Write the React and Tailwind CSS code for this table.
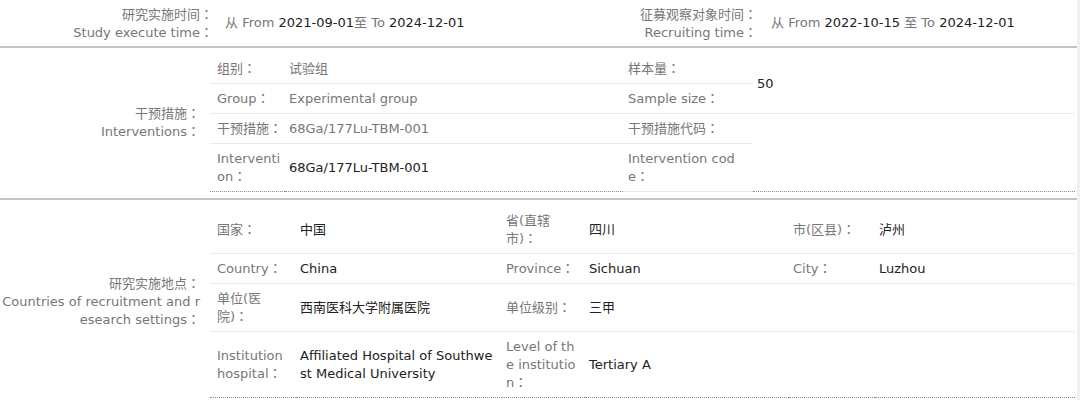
const font = "font-['DejaVu_Sans','Noto_Sans_CJK_SC',sans-serif]"

// grey label cell / value cell helpers
const lbl = 'flex items-center text-[#777] pt-[6px] pb-[5px]'
const val = 'flex items-center text-[#222] pt-[6px] pb-[5px]'
const line = 'border-b border-[#ebebeb]'
const dots = 'border-b border-dotted border-[#8a8a8a]'

function Period({ from, to, gap }) {
  return (
    <span>
      <span className="text-[#777]">从 From </span>
      {from}
      <span className="text-[#777]">{gap ? ' 至 To ' : '至 To '}</span>
      {to}
    </span>
  )
}

// ─── Row 1: study / recruiting time ───────────────────────────────────────────
// labels carry lang="zh-TW" so the full-width colon sits centred in its box
function TimeRow() {
  return (
    <div className="flex border-b-2 border-[#c4c4c4]">
      <div lang="zh-TW" className="w-[218px] shrink-0 pr-[5px] pt-[6px] pb-[4px] text-right text-[#777]">
        <div>研究实施时间：</div>
        <div>Study execute time：</div>
      </div>
      <div className="w-[402px] shrink-0 pl-[7px] flex items-center text-[#222]">
        <Period from="2021-09-01" to="2024-12-01" />
      </div>
      <div lang="zh-TW" className="w-[142px] shrink-0 pr-[5px] pt-[6px] pb-[4px] text-right text-[#777]">
        <div>征募观察对象时间：</div>
        <div>Recruiting time：</div>
      </div>
      <div className="flex-1 pl-[9px] flex items-center text-[#222]">
        <Period from="2022-10-15" to="2024-12-01" gap />
      </div>
    </div>
  )
}

function OuterLabel({ top, bottom }) {
  return (
    <div
      lang="zh-TW"
      className="w-[205px] shrink-0 pr-[5px] flex flex-col justify-center items-end text-right text-[#777] break-all"
    >
      <div>{top}</div>
      <div>{bottom}</div>
    </div>
  )
}

function Cell({ base, border, pad, span, s, label }) {
  return (
    <div lang={label ? 'zh-TW' : undefined} className={`${base} ${border} ${pad} ${span || ''}`}>
      <span>{s}</span>
    </div>
  )
}

// ─── Row 2: interventions ─────────────────────────────────────────────────────
function Interventions() {
  const l1 = 'pl-[7px] pr-[2px]'
  const l2 = 'pl-[5px] pr-[15px]'
  const v = 'pl-[4px]'
  return (
    <div className="flex border-b-2 border-[#c4c4c4] pt-[6px] pb-[6px]">
      <OuterLabel top="干预措施：" bottom="Interventions：" />
      <div className="ml-[5px] w-[865px] grid grid-cols-[75px_338px_130px_322px] break-all">
        <Cell label base={lbl} border={line} pad={l1} s="组别：" />
        <Cell base={`${val} text-[#777]`} border={line} pad={v} s="试验组" />
        <Cell label base={lbl} border={line} pad={l2} s="样本量：" />
        <Cell base={val} border={line} pad={v} span="row-span-2" s="50" />

        <Cell label base={lbl} border={line} pad={l1} s="Group：" />
        <Cell base={`${val} text-[#777]`} border={line} pad={v} s="Experimental group" />
        <Cell label base={lbl} border={line} pad={l2} s="Sample size：" />

        <Cell label base={lbl} border={line} pad={l1} s="干预措施：" />
        <Cell base={`${val} text-[#777]`} border={line} pad={v} s="68Ga/177Lu-TBM-001" />
        <Cell label base={lbl} border={line} pad={l2} s="干预措施代码：" />
        <Cell base={val} border={dots} pad={v} span="row-span-2" s="" />

        <Cell label base={lbl} border={dots} pad={l1} s="Intervention：" />
        <Cell base={val} border={dots} pad={v} s="68Ga/177Lu-TBM-001" />
        <Cell label base={lbl} border={line} pad={l2} s="Intervention code：" />
      </div>
    </div>
  )
}

// ─── Row 3: recruitment settings ──────────────────────────────────────────────
const places = [
  ['国家：', '中国', '省(直辖市)：', '四川', '市(区县)：', '泸州'],
  ['Country：', 'China', 'Province：', 'Sichuan', 'City：', 'Luzhou'],
  ['单位(医院)：', '西南医科大学附属医院', '单位级别：', '三甲', '', ''],
  ['Institution hospital：', 'Affiliated Hospital of Southwest Medical University', 'Level of the institution：', 'Tertiary A', '', ''],
]

const pads = ['pl-[7px] pr-[9px]', 'pl-[4px] pr-[6px]', 'pl-[4px] pr-[7px]', 'pl-[4px]', 'pl-[4px]', 'pl-[4px]']

function Settings() {
  return (
    <div className="flex pt-[6px] pb-[6px]">
      <OuterLabel top="研究实施地点：" bottom="Countries of recruitment and research settings：" />
      <div className="ml-[5px] w-[865px] grid grid-cols-[86px_206px_83px_204px_86px_200px] break-all">
        {places.map((row, r) =>
          row.map((text, c) => (
            <Cell
              key={`${r}-${c}`}
              label={c % 2 === 0}
              base={c % 2 === 0 ? lbl : val}
              border={r === places.length - 1 ? dots : line}
              pad={pads[c]}
              s={text}
            />
          ))
        )}
      </div>
    </div>
  )
}

export default function App() {
  return (
    <div className={`${font} text-[13px] leading-[18px] bg-white w-[1080px] h-[400px] overflow-hidden`}>
      <div className="w-[1077px] border-r-[3px] border-[#f0f0f0] box-content min-h-[400px]">
        <TimeRow />
        <Interventions />
        <Settings />
      </div>
    </div>
  )
}
